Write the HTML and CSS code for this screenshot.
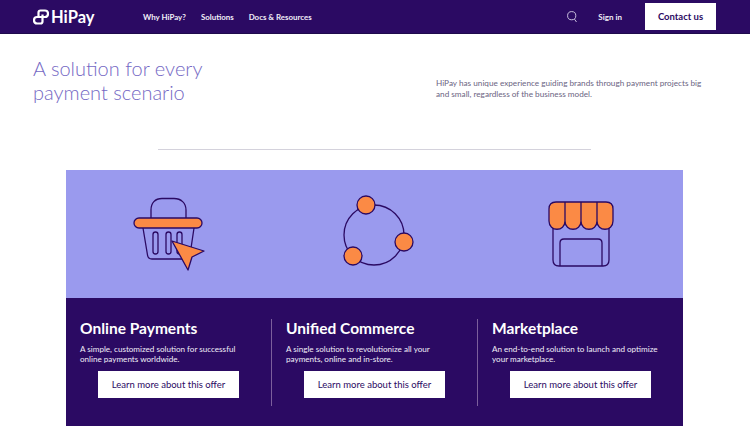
FILE: index.html
```html
<!DOCTYPE html>
<html lang="en">
<head>
    <meta charset="UTF-8">
    <title>HiPay - Solutions</title>
    <link rel="stylesheet" href="styles.css">
</head>
<body>
    <header class="topbar">
        <a class="logo" href="#">
            <svg class="logo-mark" viewBox="0 0 16 16" width="16" height="16" fill="none" stroke="#fff" stroke-width="2.200" stroke-linejoin="round">
                <path d="M5.500 9V3.500Q5.500 1.500 7.500 1.500H12Q15 1.500 15 4.700T12 8H4Q1 8 1 11.200T4 14.500H7.500Q9.500 14.500 9.500 12.500V5.500"/>
            </svg>
            <span>HiPay</span>
        </a>
        <nav class="nav">
            <a href="#">Why HiPay?</a>
            <a href="#">Solutions</a>
            <a href="#">Docs &amp; Resources</a>
        </nav>
        <div class="topbar-right">
            <svg class="search" viewBox="0 0 10 12" width="10" height="12" fill="none" stroke="#d9d3ea" stroke-width="0.9">
                <circle cx="4.700" cy="4.700" r="4.100"/>
                <path d="M7.500 8.200l2 2.800"/>
            </svg>
            <a class="signin" href="#">Sign in</a>
            <a class="contact" href="#">Contact us</a>
        </div>
    </header>

    <section class="intro">
        <h1>A solution for every<br>payment scenario</h1>
        <p>HiPay has unique experience guiding brands through payment projects big and small, regardless of the business model.</p>
    </section>

    <hr class="rule">

    <section class="offers">
        <div class="icons">
            <div class="icon-cell">
                <svg viewBox="0 0 72 74" width="72" height="74" fill="none" stroke="#2b0a63" stroke-width="1.300" stroke-linejoin="round">
                    <path d="M18 21V13C18 6 22 1.500 29 1.500H41C48 1.500 53 6 53 13V21"/>
                    <path d="M10 31L14.500 58Q15 62 19 62H52Q56 62 57 58L61 31"/>
                    <rect x="20" y="35" width="5" height="22" rx="2.500"/>
                    <rect x="33" y="35" width="5" height="22" rx="2.500"/>
                    <rect x="44" y="35" width="5" height="22" rx="2.500"/>
                    <rect x="1" y="21" width="68" height="10" rx="5" fill="#fb8a45"/>
                    <path d="M39 44L71 54L59 60L55 73Z" fill="#fb8a45"/>
                </svg>
            </div>
            <div class="icon-cell">
                <svg viewBox="0 0 80 80" width="80" height="80" fill="none" stroke="#2b0a63" stroke-width="1.300">
                    <circle cx="39" cy="41" r="30"/>
                    <circle cx="31" cy="11" r="9" fill="#fb8a45"/>
                    <circle cx="69" cy="48" r="9" fill="#fb8a45"/>
                    <circle cx="18" cy="62" r="9" fill="#fb8a45"/>
                </svg>
            </div>
            <div class="icon-cell">
                <svg viewBox="0 0 66 66" width="66" height="66" fill="none" stroke="#2b0a63" stroke-width="1.300">
                    <path d="M5 24V59Q5 65 11 65H55Q61 65 61 59V24"/>
                    <path d="M12 65V42Q12 38 16 38H50Q54 38 54 42V65"/>
                    <path d="M8 1H58Q65 1 65 8V20C65 31 49 31 49 20C49 31 33 31 33 20C33 31 17 31 17 20C17 31 1 31 1 20V8Q1 1 8 1Z" fill="#fb8a45"/>
                    <path d="M17 1V20M33 1V20M49 1V20"/>
                </svg>
            </div>
        </div>
        <div class="cards">
            <div class="card">
                <h2>Online Payments</h2>
                <p>A simple, customized solution for successful online payments worldwide.</p>
                <a class="offer-btn" href="#">Learn more about this offer</a>
            </div>
            <div class="card">
                <h2>Unified Commerce</h2>
                <p>A single solution to revolutionize all your payments, online and in-store.</p>
                <a class="offer-btn" href="#">Learn more about this offer</a>
            </div>
            <div class="card">
                <h2>Marketplace</h2>
                <p>An end-to-end solution to launch and optimize your marketplace.</p>
                <a class="offer-btn" href="#">Learn more about this offer</a>
            </div>
        </div>
    </section>
</body>
</html>
```

FILE: styles.css
```css
* {
    margin: 0;
    padding: 0;
    box-sizing: border-box;
}

body {
    font-family: Lato, "Open Sans", sans-serif;
    background: #fff;
    overflow: hidden;
}

a {
    text-decoration: none;
    color: inherit;
}

.topbar {
    height: 34px;
    background: #2b0a63;
    border-bottom: 1px solid #1f0a4c;
    color: #f1eef8;
    display: flex;
    align-items: center;
    padding: 0 34px 0 33px;
}

.logo {
    display: flex;
    align-items: center;
    gap: 2px;
    width: 110px;
    font-size: 16.500px;
    font-weight: 700;
    color: #fff;
}

.nav {
    display: flex;
    gap: 15px;
    font-size: 7.900px;
    font-weight: 700;
}

.topbar-right {
    margin-left: auto;
    display: flex;
    align-items: center;
}

.search {
    margin-right: 21px;
}

.signin {
    font-size: 8px;
    font-weight: 700;
    margin-right: 23px;
}

.contact {
    width: 71px;
    height: 27px;
    background: #fff;
    color: #2b0a63;
    font-size: 9.500px;
    font-weight: 700;
    display: flex;
    align-items: center;
    justify-content: center;
}

.intro {
    display: grid;
    grid-template-columns: 403px 272px;
    align-items: start;
    padding: 22px 0 0 33px;
}

.intro h1 {
    font-size: 20px;
    line-height: 24px;
    font-weight: 300;
    color: #7468c4;
}

.intro p {
    margin-top: 22px;
    font-size: 8.200px;
    line-height: 11px;
    color: #6b6482;
}

.rule {
    border: 0;
    height: 1px;
    background: #d4d2dc;
    width: 433px;
    margin: 45px 0 20px 158px;
}

.offers {
    width: 617px;
    margin-left: 66px;
}

.icons {
    height: 128px;
    background: #9a9aee;
    display: grid;
    grid-template-columns: 206px 206px 205px;
}

.icon-cell {
    display: flex;
    align-items: center;
    justify-content: center;
}

.cards {
    height: 128px;
    background: #2b0a63;
    display: grid;
    grid-template-columns: 206px 206px 205px;
    padding-top: 21px;
}

.card {
    height: 87px;
    padding: 0 14px;
    border-right: 1px solid #7c5f9c;
    color: #f1eef8;
    display: flex;
    flex-direction: column;
}

.card:last-child {
    border-right: 0;
}

.card h2 {
    font-size: 15.500px;
    line-height: 18px;
    font-weight: 700;
    color: #fff;
}

.card p {
    margin-top: 7px;
    font-size: 8.100px;
    line-height: 10px;
    height: 20px;
}

.offer-btn {
    align-self: center;
    margin-top: 7px;
    width: 141px;
    height: 27px;
    background: #fff;
    color: #2b0a63;
    font-size: 9.500px;
    display: flex;
    align-items: center;
    justify-content: center;
}
```
